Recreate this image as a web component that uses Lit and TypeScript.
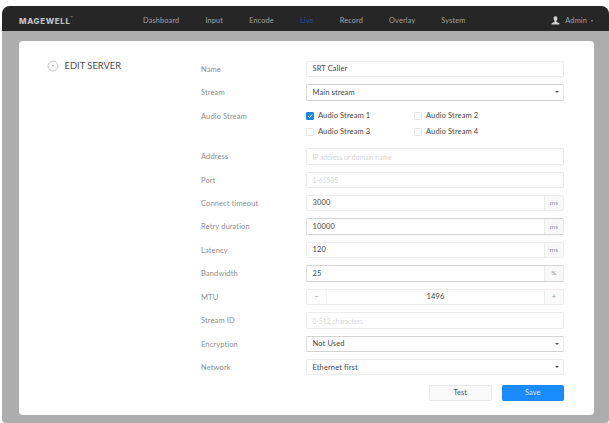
import { LitElement, html, css, svg, nothing } from 'lit';
import { customElement, property, state } from 'lit/decorators.js';
import { classMap } from 'lit/directives/class-map.js';

@customElement('top-bar')
export class TopBar extends LitElement {
    @property() active = 'Live';

    static styles = css`
      :host {
        display: flex;
        align-items: center;
        box-sizing: border-box;
        height: 25px;
        padding: 4px 14px 0 17px;
        background: #262626;
        color: #a4a4a4;
        font-size: 7.3px;
        letter-spacing: 0.18px;
      }

      .brand {
        display: flex;
        width: 124px;
        color: #c0c0c0;
        font: 800 8px/10px Inter, sans-serif;
        letter-spacing: 0.62px;
      }

      .brand sup {
        font-size: 3px;
        line-height: 5px;
        letter-spacing: 0;
      }

      nav {
        display: flex;
        flex: 1;
        gap: 26px;
      }

      .active {
        color: #2446a0;
      }

      .user {
        display: flex;
        align-items: center;
      }

      .user svg {
        width: 9px;
        height: 9px;
        margin-right: 5px;
        fill: #d0d0d0;
      }

      .caret {
        margin: 0 2px 0 4px;
        border: 1.5px solid transparent;
        border-top: 2px solid #999;
        border-bottom: 0;
      }
    `;

    render() {
        const items = ['Dashboard', 'Input', 'Encode', 'Live', 'Record', 'Overlay', 'System'];
        return html`
      <div class="brand">MAGEWELL<sup>™</sup></div>
      <nav>
        ${items.map(item => html`<span class=${classMap({ active: item === this.active })}>${item}</span>`)}
      </nav>
      <div class="user">
        <svg viewBox="0 0 9 9">
          <path d="M4.5 0.3C5.9 0.3 6.5 1.2 6.4 2.5C6.3 3.7 5.8 4.5 5.5 4.9V5.8L8 6.9Q8.5 7.2 8.5 8.5H0.5Q0.5 7.2 1 6.9L3.5 5.8V4.9C3.2 4.5 2.7 3.7 2.6 2.5C2.5 1.2 3.1 0.3 4.5 0.3Z" />
        </svg>
        <span>Admin</span>
        <i class="caret"></i>
      </div>
    `;
    }
}

@customElement('form-row')
export class FormRow extends LitElement {
    @property() label = '';

    static styles = css`
      :host {
        display: grid;
        grid-template-columns: 105px 258px;
      }

      .label {
        height: 16.4px;
        color: #8e8e8e;
        line-height: 18px;
      }
    `;

    render() {
        return html`
      <div class="label">${this.label}</div>
      <slot></slot>
    `;
    }
}

@customElement('field-box')
export class FieldBox extends LitElement {
    @property() value = '';
    @property() placeholder = '';
    @property() unit = '';
    @property({ type: Boolean }) select = false;
    @property({ type: Boolean }) strong = false;

    static styles = css`
      :host {
        display: block;
      }

      .box {
        display: flex;
        align-items: center;
        box-sizing: border-box;
        height: 16.4px;
        border: 1px solid #ededed;
        border-radius: 1.5px;
        background: #fff;
        color: #484848;
      }

      .box.strong {
        border-color: #d3d3d3 #ebebeb #d3d3d3 #e0e0e0;
      }

      .text {
        flex: 1;
        padding: 0.6px 0 0 5.5px;
      }

      .empty {
        color: #d6d6d6;
        font-size: 6.7px;
        letter-spacing: 0;
      }

      .unit {
        display: flex;
        align-items: center;
        justify-content: center;
        align-self: stretch;
        width: 18px;
        border-left: 1px solid #ececec;
        background: #f8f8f8;
        color: #929292;
        font-size: 6.5px;
      }

      .caret {
        margin-right: 4px;
        border: 2px solid transparent;
        border-top: 2.5px solid #555;
        border-bottom: 0;
      }
    `;

    render() {
        return html`
      <div class="box ${classMap({ strong: this.strong })}">
        <span class="text ${classMap({ empty: !this.value })}">${this.value || this.placeholder}</span>
        ${this.unit ? html`<span class="unit">${this.unit}</span>` : nothing}
        ${this.select ? html`<i class="caret"></i>` : nothing}
      </div>
    `;
    }
}

@customElement('number-stepper')
export class NumberStepper extends LitElement {
    @property({ type: Number }) value = 0;

    static styles = css`
      :host {
        display: grid;
        grid-template-columns: 20px 1fr 19px;
        align-items: center;
        box-sizing: border-box;
        height: 16.4px;
        border: 1px solid #ededed;
        border-radius: 1.5px;
        color: #484848;
        text-align: center;
      }

      .value {
        padding-top: 0.6px;
      }

      button {
        align-self: stretch;
        padding: 0;
        border: 0;
        background: #fdfdfd;
        color: #999;
        font: inherit;
      }

      .minus {
        border-right: 1px solid #f6f6f6;
      }

      .plus {
        border-left: 1px solid #ececec;
        background: #fafafa;
      }
    `;

    render() {
        return html`
      <button class="minus" @click=${() => this.value--}>−</button>
      <span class="value">${this.value}</span>
      <button class="plus" @click=${() => this.value++}>+</button>
    `;
    }
}

@customElement('app-root')
export class AppRoot extends LitElement {
    @state() checked = [true, false, false, false];

    static styles = css`
      :host {
        display: block;
        box-sizing: border-box;
        width: 609px;
        height: 423px;
        padding: 6px 0 0 2px;
        overflow: hidden;
        background: #fff;
        font: 7.5px/10px Lato, sans-serif;
        letter-spacing: 0.12px;
      }

      .window {
        height: 417px;
        border-radius: 8px 8px 4px 4px;
        overflow: hidden;
        background: #adadad;
      }

      .panel {
        display: flex;
        box-sizing: border-box;
        width: 575px;
        height: 374px;
        margin: 10px 0 0 17px;
        padding: 19.8px 0 0 28px;
        border-radius: 4px;
        background: #fff;
      }

      .title {
        display: flex;
        align-items: center;
        gap: 5.5px;
        width: 154px;
        height: 11px;
        color: #4e4e4e;
        font-size: 9.4px;
        letter-spacing: 0;
      }

      .title svg {
        width: 12px;
        height: 12px;
        fill: none;
        stroke: #aaa;
        stroke-width: 0.8;
      }

      .form {
        display: grid;
        align-content: start;
        gap: 7.05px;
      }

      .checks {
        display: grid;
        grid-template-columns: 108px 1fr;
        height: 33.4px;
        grid-auto-rows: 16.4px;
        align-items: center;
        color: #484848;
      }

      .check {
        display: flex;
        align-items: center;
        gap: 4px;
      }

      .tick {
        box-sizing: border-box;
        width: 8px;
        height: 8px;
        border: 1px solid #e8e8e8;
        border-radius: 1px;
      }

      .tick.on {
        border-color: #1b87e5;
        background: #1b87e5;
      }

      .tick svg {
        display: block;
        width: 6px;
        height: 6px;
        fill: none;
        stroke: #fff;
        stroke-width: 0.9;
      }

      .actions {
        display: flex;
        justify-content: flex-end;
        gap: 10px;
        margin-top: 2.4px;
      }

      .actions button {
        box-sizing: border-box;
        width: 62.5px;
        height: 16px;
        padding: 0;
        border: 1px solid #e9e9e9;
        border-radius: 1.5px;
        background: #f9f9f9;
        color: #555;
        font: inherit;
      }

      .actions .save {
        border-color: #1a86f2;
        background: #1a8cff;
        color: #d8ebff;
      }
    `;

    toggle(index: number) {
        this.checked = this.checked.map((on, i) => (i === index ? !on : on));
    }

    render() {
        return html`
      <div class="window">
        <top-bar></top-bar>
        <main class="panel">
          <div class="title">
            <svg viewBox="0 0 12 12">
              <circle cx="6" cy="6" r="4.9" stroke-dasharray="2.6 0.5" />
              <circle cx="6" cy="6" r="0.8" fill="#999" stroke="none" />
            </svg>
            <span>EDIT SERVER</span>
          </div>
          <div class="form">
            <form-row label="Name"><field-box value="SRT Caller"></field-box></form-row>
            <form-row label="Stream"><field-box value="Main stream" select strong></field-box></form-row>
            <form-row label="Audio Stream">
              <div class="checks">
                ${this.checked.map((on, i) => html`
                  <div class="check" @click=${() => this.toggle(i)}>
                    <span class="tick ${classMap({ on })}">
                      ${on ? html`<svg viewBox="0 0 6 6">${svg`<path d="M1 3L2.5 4.5L5 1.5" />`}</svg>` : nothing}
                    </span>
                    <span>Audio Stream ${i + 1}</span>
                  </div>
                `)}
              </div>
            </form-row>
            <form-row label="Address"><field-box placeholder="IP address or domain name"></field-box></form-row>
            <form-row label="Port"><field-box placeholder="1-65535"></field-box></form-row>
            <form-row label="Connect timeout"><field-box value="3000" unit="ms"></field-box></form-row>
            <form-row label="Retry duration"><field-box value="10000" unit="ms" strong></field-box></form-row>
            <form-row label="Latency"><field-box value="120" unit="ms"></field-box></form-row>
            <form-row label="Bandwidth"><field-box value="25" unit="%" strong></field-box></form-row>
            <form-row label="MTU"><number-stepper value="1496"></number-stepper></form-row>
            <form-row label="Stream ID"><field-box placeholder="0-512 characters"></field-box></form-row>
            <form-row label="Encryption"><field-box value="Not Used" select strong></field-box></form-row>
            <form-row label="Network"><field-box value="Ethernet first" select></field-box></form-row>
            <div class="actions">
              <button>Test</button>
              <button class="save">Save</button>
            </div>
          </div>
        </main>
      </div>
    `;
    }
}
